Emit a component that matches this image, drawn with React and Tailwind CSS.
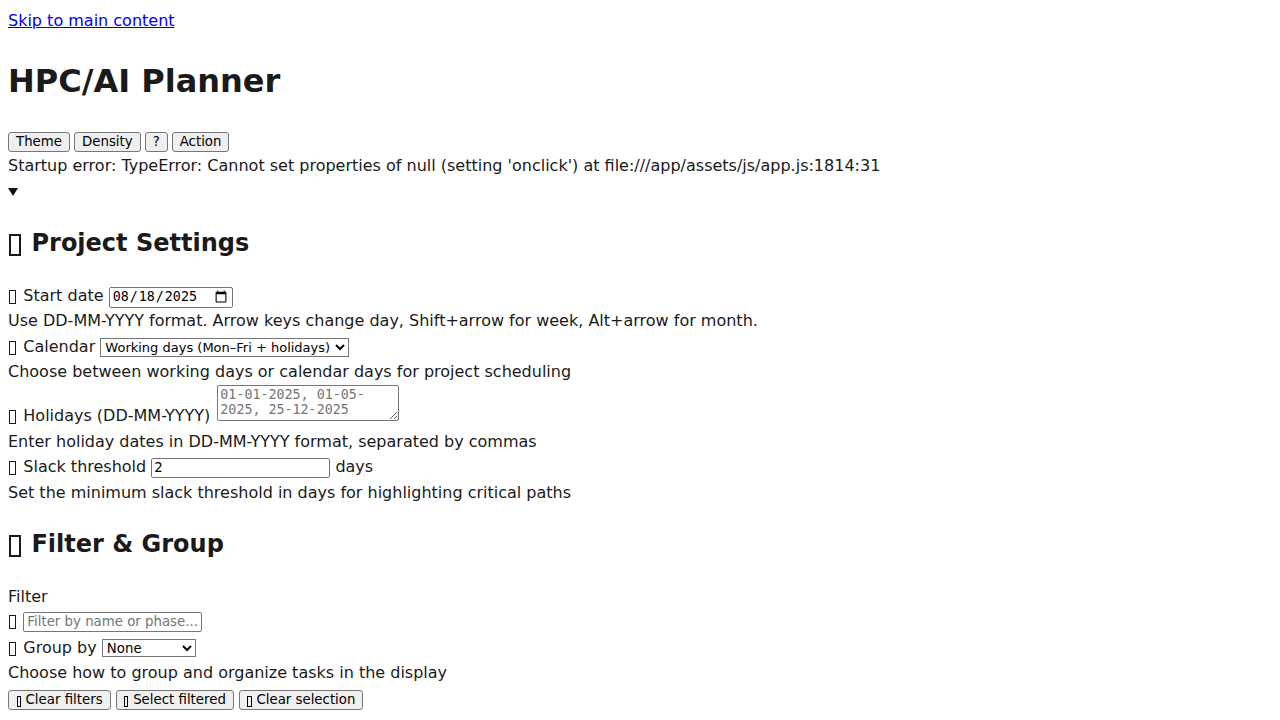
import React from "react";

// missing-glyph box, the reference shows emoji as tofu
const Tofu = ({ thick }) => (
  <span
    className={`inline-block border-current ${
      thick
        ? "ml-[0.04em] mr-[0.1em] w-[0.49em] h-[0.9em] align-[-0.2em] border-2"
        : "ml-[0.06em] mr-[0.12em] w-[0.46em] h-[0.86em] align-[-0.19em] border"
    }`}
  />
);

// narrower box used inside buttons
const SmallTofu = () => (
  <span className="inline-block ml-[0.04em] mr-[0.04em] w-[0.32em] h-[0.8em] align-[-0.2em] border border-current" />
);

const Btn = ({ children }) => (
  <button className="h-[20px] px-[7px] bg-[#efefef] border border-[#767676] rounded-[3px] text-[13.33px] leading-[18px] text-black">
    {children}
  </button>
);

const field =
  "border border-[#767676] rounded-[2px] bg-white text-[13.33px] text-black align-baseline";

export default function App() {
  return (
    <div className="px-2 pt-[9px] font-['DejaVu_Sans',sans-serif] text-[16px] leading-[24px] text-[#1a1a1a]">
      <div>
        <a href="#main" className="text-[#0000ee] underline">
          Skip to main content
        </a>
      </div>

      <h1 className="mt-[24px] text-[32px] leading-[48px] font-bold">HPC/AI Planner</h1>

      <div className="mt-[25px] flex h-[24px] items-center gap-[4px]">
        <Btn>Theme</Btn>
        <Btn>Density</Btn>
        <Btn>?</Btn>
        <Btn>Action</Btn>
      </div>

      <div>
        Startup error: TypeError: Cannot set properties of null (setting 'onclick') at
        file:///app/assets/js/app.js:1814:31
      </div>

      <div className="h-[24px] pt-[10px]">
        <svg width="10" height="8" viewBox="0 0 10 8" className="block">
          <polygon points="0,0 10,0 5,8" fill="#111" />
        </svg>
      </div>

      <main id="main">
        <h2 className="mt-[23px] text-[24px] leading-[36px] font-bold">
          <Tofu thick /> Project Settings
        </h2>

        <div className="mt-[23px]">
          <Tofu /> Start date{" "}
          <input
            type="date"
            defaultValue="2025-08-18"
            className={`${field} w-[124px] h-[21px] px-[2px] font-['DejaVu_Sans_Mono',monospace]`}
          />
        </div>
        <div className="mt-[1px]">
          Use DD-MM-YYYY format. Arrow keys change day, Shift+arrow for week, Alt+arrow for month.
        </div>

        <div className="mt-[2px]">
          <Tofu /> Calendar{" "}
          <select defaultValue="working" className={`${field} w-[249px] h-[19px] rounded-none text-[13px]`}>
            <option value="working">Working days (Mon–Fri + holidays)</option>
            <option value="calendar">Calendar days</option>
          </select>
        </div>
        <div className="mt-[0.5px]">Choose between working days or calendar days for project scheduling</div>

        <div className="mt-[1px] flex items-start gap-[7px]">
          <span className="mt-[19.5px]">
            <Tofu /> Holidays (DD-MM-YYYY)
          </span>
          <textarea
            placeholder="01-01-2025, 01-05-2025, 25-12-2025"
            className="w-[182px] h-[36px] px-[2px] py-[1px] border border-[#767676] rounded-[2px] bg-white text-[13.33px] leading-[15.5px] font-['DejaVu_Sans_Mono',monospace] placeholder:text-[#757575]"
          />
        </div>
        <div className="mt-[2px]">Enter holiday dates in DD-MM-YYYY format, separated by commas</div>

        <div className="mt-[1px]">
          <Tofu /> Slack threshold{" "}
          <input type="text" defaultValue="2" className={`${field} w-[179px] h-[20px] px-[2px]`} /> days
        </div>
        <div className="mt-[2px]">Set the minimum slack threshold in days for highlighting critical paths</div>

        <h2 className="mt-[21px] text-[24px] leading-[36px] font-bold">
          <Tofu thick /> Filter &amp; Group
        </h2>

        <div className="mt-[23px]">Filter</div>
        <div>
          <Tofu />{" "}
          <input
            type="text"
            placeholder="Filter by name or phase..."
            className={`${field} w-[179px] h-[20px] px-[3px] placeholder:text-[#757575]`}
          />
        </div>

        <div className="mt-[3px]">
          <Tofu /> Group by{" "}
          <select defaultValue="none" className={`${field} w-[94px] h-[18px] rounded-none`}>
            <option value="none">None</option>
            <option value="phase">Phase</option>
            <option value="owner">Owner</option>
          </select>
        </div>
        <div className="mt-[1px]">Choose how to group and organize tasks in the display</div>

        <div className="mt-[3px] flex h-[24px] items-center gap-[5px]">
          <Btn>
            <SmallTofu /> Clear filters
          </Btn>
          <Btn>
            <SmallTofu /> Select filtered
          </Btn>
          <Btn>
            <SmallTofu /> Clear selection
          </Btn>
        </div>
      </main>
    </div>
  );
}
